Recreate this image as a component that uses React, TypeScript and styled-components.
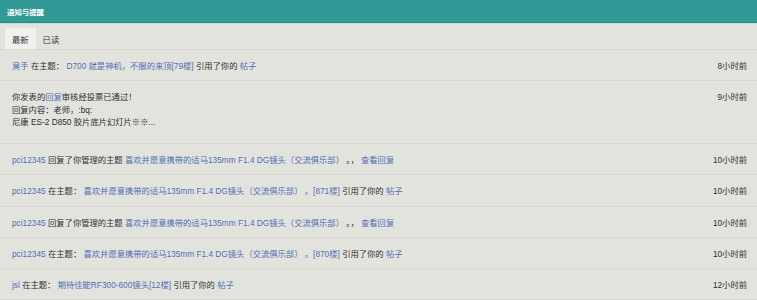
import styled, { createGlobalStyle } from 'styled-components';

const GlobalStyle = createGlobalStyle`
  html, body {
    margin: 0;
    padding: 0;
    background: #e3e3de;
  }
  body {
    font-family: "Liberation Sans", "Noto Sans CJK SC", sans-serif;
    font-size: 8.3px;
    color: #2e2e2e;
  }
`;

const Page = styled.div`
  width: 757px;
  height: 300px;
  overflow: hidden;
  background: #e3e3de;
`;

const Header = styled.div`
  height: 22px;
  display: flex;
  align-items: center;
  padding: 0 7px;
  background: #339996;
  border-bottom: 1px solid #2b8581;
  box-shadow: 0 1px 0 #bfe2de;
  color: #fff;
  font-weight: bold;
  font-size: 7.4px;
`;

const Tabs = styled.div`
  display: flex;
  align-items: flex-end;
  height: 27px;
  padding: 0 5px;
  box-sizing: border-box;
  border-bottom: 1px solid #d9d9d4;
`;

const Tab = styled.div<{ $active?: boolean }>`
  height: 21px;
  display: flex;
  align-items: center;
  padding: 0 7px;
  background: ${p => (p.$active ? '#f0f0ed' : 'transparent')};
  color: #333;
`;

const List = styled.div`
  display: flex;
  flex-direction: column;
`;

const Row = styled.div<{ $tall?: boolean }>`
  display: flex;
  justify-content: space-between;
  align-items: flex-start;
  padding: ${p => (p.$tall ? '10px 10px 14px 12px' : '10px 10px 7.7px 12px')};
  line-height: 12.6px;
  border-bottom: 1px solid #d9d9d4;
`;

const Body = styled.div`
  white-space: pre;
`;

const Link = styled.a`
  color: #4e6fb4;
  text-decoration: none;
`;

const Time = styled.span`
  white-space: nowrap;
`;

const topic = '喜欢并愿意携带的适马135mm F1.4 DG镜头（交流俱乐部）';

const App = () => (
  <>
    <GlobalStyle />
    <Page>
      <Header>通知与提醒</Header>
      <Tabs>
        <Tab $active>最新</Tab>
        <Tab>已读</Tab>
      </Tabs>
      <List>
        <Row>
          <Body>
            <Link>臭手</Link> 在主题： <Link>D700 就是神机，不服的来顶[79楼]</Link> 引用了你的 <Link>帖子</Link>
          </Body>
          <Time>8小时前</Time>
        </Row>
        <Row $tall>
          <Body>
            你发表的<Link>回复</Link>审核经投票已通过！
            <br />
            回复内容：老师，:bq:
            <br />
            尼康 ES-2 D850 胶片底片幻灯片※※...
          </Body>
          <Time>9小时前</Time>
        </Row>
        <Row>
          <Body>
            <Link>pci12345</Link> 回复了你管理的主题 <Link>{topic}</Link> 。， <Link>查看回复</Link>
          </Body>
          <Time>10小时前</Time>
        </Row>
        <Row>
          <Body>
            <Link>pci12345</Link> 在主题： <Link>{topic} 。[871楼]</Link> 引用了你的 <Link>帖子</Link>
          </Body>
          <Time>10小时前</Time>
        </Row>
        <Row>
          <Body>
            <Link>pci12345</Link> 回复了你管理的主题 <Link>{topic}</Link> 。， <Link>查看回复</Link>
          </Body>
          <Time>10小时前</Time>
        </Row>
        <Row>
          <Body>
            <Link>pci12345</Link> 在主题： <Link>{topic} 。[870楼]</Link> 引用了你的 <Link>帖子</Link>
          </Body>
          <Time>10小时前</Time>
        </Row>
        <Row>
          <Body>
            <Link>jsl</Link> 在主题： <Link>期待佳能RF300-600镜头[12楼]</Link> 引用了你的 <Link>帖子</Link>
          </Body>
          <Time>12小时前</Time>
        </Row>
      </List>
    </Page>
  </>
);

export default App;
